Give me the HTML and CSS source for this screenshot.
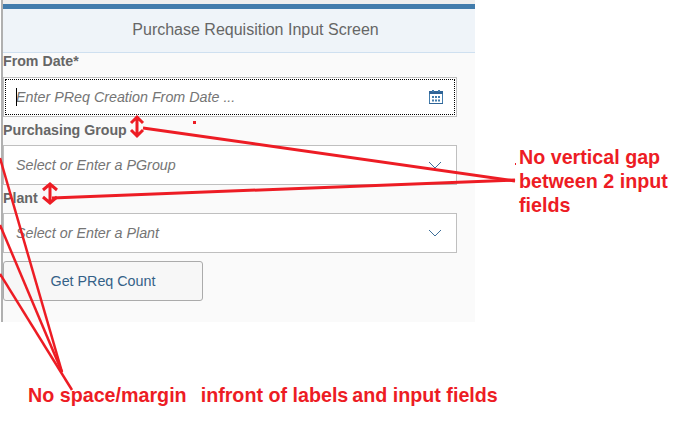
FILE: index.html
```html
<!DOCTYPE html>
<html lang="en">
<head>
<meta charset="utf-8">
<title>Purchase Requisition Input Screen</title>
<link rel="stylesheet" href="styles.css">
</head>
<body>
<div class="page">
  <main class="panel">
    <header class="title-bar">Purchase Requisition Input Screen</header>
    <form class="form">
      <label class="label label-first">From Date*</label>
      <div class="field field-focus">
        <span class="caret"></span><span class="placeholder">Enter PReq Creation From Date ...</span>
        <svg class="icon-cal" width="16" height="16" viewBox="0 0 16 16">
          <rect x="1.5" y="2.5" width="13" height="12" fill="#fff" stroke="#427cac"/>
          <rect x="1" y="2" width="14" height="3" fill="#2f6497"/>
          <rect x="4" y="1" width="2" height="2" fill="#427cac"/>
          <rect x="10" y="1" width="2" height="2" fill="#427cac"/>
          <rect x="1" y="14" width="14" height="1" fill="#2f6497"/>
          <path d="M4 7h2v2H4zM7 7h2v2H7zM10 7h2v2h-2zM4 10.500h2v2H4zM7 10.500h2v2H7zM10 10.500h2v2h-2z" fill="#427cac"/>
        </svg>
      </div>
      <label class="label label-tight">Purchasing Group</label>
      <div class="field">
        <span class="placeholder">Select or Enter a PGroup</span>
        <svg class="icon-chev" width="14" height="8" viewBox="0 0 14 8"><path d="M1 1l6 6 6-6" fill="none" stroke="#3f6f99"/></svg>
      </div>
      <label class="label">Plant</label>
      <div class="field">
        <span class="placeholder">Select or Enter a Plant</span>
        <svg class="icon-chev" width="14" height="8" viewBox="0 0 14 8"><path d="M1 1l6 6 6-6" fill="none" stroke="#3f6f99"/></svg>
      </div>
      <button class="button" type="button">Get PReq Count</button>
    </form>
  </main>

  <svg class="markup" width="683" height="427" viewBox="0 0 683 427">
    <g fill="none" stroke="#ed1c24">
      <path d="M515 181L143 128" stroke-width="3"/>
      <path d="M515 180L52 198" stroke-width="3"/>
      <path d="M137 117V136M131 123l6-6 6 6M131 130l6 6 6-6" stroke-width="3"/>
      <path d="M50 184V203M43 190l7-6 7 6M43 197l7 6 7-6" stroke-width="3"/>
      <path d="M0 158L62 372" stroke-width="2.500"/>
      <path d="M0 225L62 372" stroke-width="2.500"/>
      <path d="M0 274L72 390" stroke-width="2.500"/>
    </g>
    <rect x="193" y="121" width="3" height="3" fill="#ed1c24"/>
    <rect x="515" y="163" width="1" height="2" fill="#ed1c24"/>
  </svg>

  <p class="note note-side">No vertical gap<br>between 2 input<br>fields</p>
  <p class="note note-bottom">No space/margin<span class="w1">infront of labels</span><span class="w2">and input fields</span></p>
</div>
</body>
</html>
```
FILE: styles.css
```css
html, body {
  margin: 0;
  padding: 0;
  background: #fff;
}

.page {
  position: relative;
  width: 683px;
  height: 427px;
  overflow: hidden;
  font-family: "Liberation Sans", Arial, sans-serif;
}

.panel {
  box-sizing: border-box;
  width: 474px;
  height: 322px;
  margin-left: 1px;
  padding-top: 4px;
  background: #fafafa;
  border-left: 2px solid #b0b0b0;
  box-shadow: inset 0 4px 0 #eeeeee;
}

.title-bar {
  box-sizing: border-box;
  height: 49px;
  border-top: 5px solid #427cac;
  border-bottom: 1px solid #cfe0f0;
  background: #eff4f9;
  color: #666;
  font-size: 16px;
  line-height: 42px;
  text-align: center;
  padding-left: 33px;
}

.form {
  display: flex;
  flex-direction: column;
  align-items: flex-start;
}

.label {
  display: block;
  height: 28px;
  color: #666;
  font-size: 14.2px;
  font-weight: bold;
  line-height: 27px;
}

.label-first {
  height: 24px;
  line-height: 17px;
}

.field {
  box-sizing: border-box;
  position: relative;
  display: flex;
  align-items: center;
  justify-content: space-between;
  width: 454px;
  height: 40px;
  padding: 0 14px 0 12px;
  background: #fff;
  border: 1px solid #bfbfbf;
}

.field-focus {
  outline: 1px dotted #000;
  outline-offset: -3px;
  padding-right: 12px;
}

.caret {
  position: absolute;
  left: 12px;
  top: 10px;
  width: 1px;
  height: 18px;
  background: #000;
}

.placeholder {
  color: #757575;
  font-size: 14.3px;
  font-style: italic;
}

.button {
  box-sizing: border-box;
  width: 200px;
  height: 40px;
  margin-top: 8px;
  background: #f7f7f7;
  border: 1px solid #ababab;
  border-radius: 3px;
  color: #346187;
  font-family: inherit;
  font-size: 14.3px;
}

.markup {
  position: absolute;
  left: 0;
  top: 0;
}

.note {
  position: absolute;
  margin: 0;
  color: #ed1c24;
  font-size: 19.7px;
  font-weight: bold;
  line-height: 24px;
  white-space: nowrap;
}

.note-side {
  left: 519px;
  top: 145px;
}

.note-bottom {
  left: 28px;
  top: 383px;
}

.w1 {
  margin-left: 14px;
}

.w2 {
  margin-left: 4px;
}
```
